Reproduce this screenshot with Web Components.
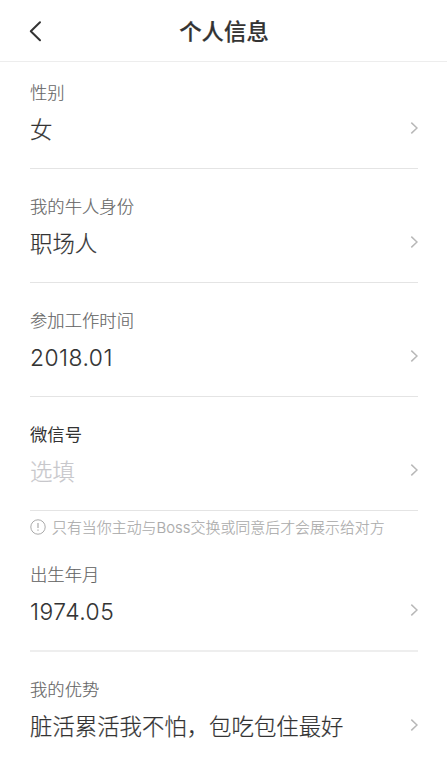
<!DOCTYPE html>
<html lang="zh-CN">
<head>
<meta charset="utf-8">
<meta name="viewport" content="width=device-width">
<title>个人信息</title>
<style>
html,body{margin:0;height:100%;overflow:hidden;background:#fff}
body{font-family:Inter,"Noto Sans CJK SC",sans-serif;color:#333}
</style>
</head>
<body>
<profile-page>
  <nav-header slot="header">个人信息</nav-header>
  <info-row label="性别" first>女</info-row>
  <info-row label="我的牛人身份">职场人</info-row>
  <info-row label="参加工作时间" numeric>2018.01</info-row>
  <info-row label="微信号" active>选填</info-row>
  <hint-note>只有当你主动与Boss交换或同意后才会展示给对方</hint-note>
  <info-row label="出生年月" numeric thick>1974.05</info-row>
  <info-row label="我的优势" last>脏活累活我不怕，包吃包住最好</info-row>
</profile-page>
<script>
const define = (name, html, setup) => customElements.define(name, class extends HTMLElement {
  constructor() {
    super();
    this.attachShadow({mode: 'open'}).innerHTML = html;
  }
  connectedCallback() { if (setup) setup(this); }
});

define('profile-page', `
<style>
:host{display:flex;flex-direction:column;height:765px;overflow:hidden}
main{display:flex;flex-direction:column;padding:0 29px 0 30px}
</style>
<slot name="header"></slot><main><slot></slot></main>`);

define('nav-header', `
<style>
:host{display:grid;grid-template-columns:60px 1fr 59px;align-items:center;box-sizing:border-box;height:62px;flex:none;border-bottom:1px solid #ededed}
svg{display:block;margin-left:28px}
h1{margin:0;padding-top:2px;text-align:center;font-size:22.4px;line-height:30px;font-weight:500;color:#333;-webkit-text-stroke:.2px #333}
</style>
<svg width="16" height="24" viewBox="0 0 16 24" fill="none" stroke="#333" stroke-width="2" stroke-linecap="round" stroke-linejoin="round"><path d="M12 3.2 2.8 12.2 12 21.2"/></svg>
<h1><slot></slot></h1>`);

define('info-row', `
<style>
:host{display:grid;grid-template-columns:1fr auto;grid-template-rows:18px 30px;row-gap:13px;box-sizing:border-box;height:114px;padding-top:29px;border-bottom:1px solid #e4e4e4;flex:none}
:host([first]){height:107px;padding-top:22px}
:host([last]){border-bottom-color:transparent}
:host([thick]){border-bottom:2px solid #eee;height:115px}
.label{grid-column:1/3;font-size:17.33px;line-height:18px;font-weight:300;color:#666;-webkit-text-stroke:.15px currentColor}
.value{font-size:22.4px;line-height:30px;font-weight:300;white-space:nowrap;color:#333;-webkit-text-stroke:.22px currentColor}
:host([numeric]) .value{font-size:22.8px;letter-spacing:.5px;-webkit-text-stroke:.08px currentColor}
:host([active]) .label{font-weight:400;-webkit-text-stroke:0;color:#333}
:host([active]) .value{color:#c7c7cb}
svg{display:block;align-self:center;margin-top:-4px}
</style>
<div class="label"></div>
<div class="value"><slot></slot></div>
<svg width="8" height="14" viewBox="0 0 8 14" fill="none" stroke="#b8b8b8" stroke-width="1.5"><path d="M1.3 1.6 7 7 1.3 12.4"/></svg>`,
el => el.shadowRoot.querySelector('.label').textContent = el.getAttribute('label'));

define('hint-note', `
<style>
:host{display:flex;align-items:center;gap:6px;height:26px;flex:none;font-size:14.94px;line-height:20px;font-weight:300;color:#aaa;white-space:nowrap;-webkit-text-stroke:.15px currentColor}
svg{flex:none;margin-top:6px}
span{padding-top:8px}
</style>
<svg width="16" height="16" viewBox="0 0 16 16" fill="none" stroke="#aaa"><circle cx="8" cy="8" r="7.2"/><path d="M8 4v5M8 10.4v1.4" stroke-width="1.2"/></svg>
<span><slot></slot></span>`);
</script>
</body>
</html>
